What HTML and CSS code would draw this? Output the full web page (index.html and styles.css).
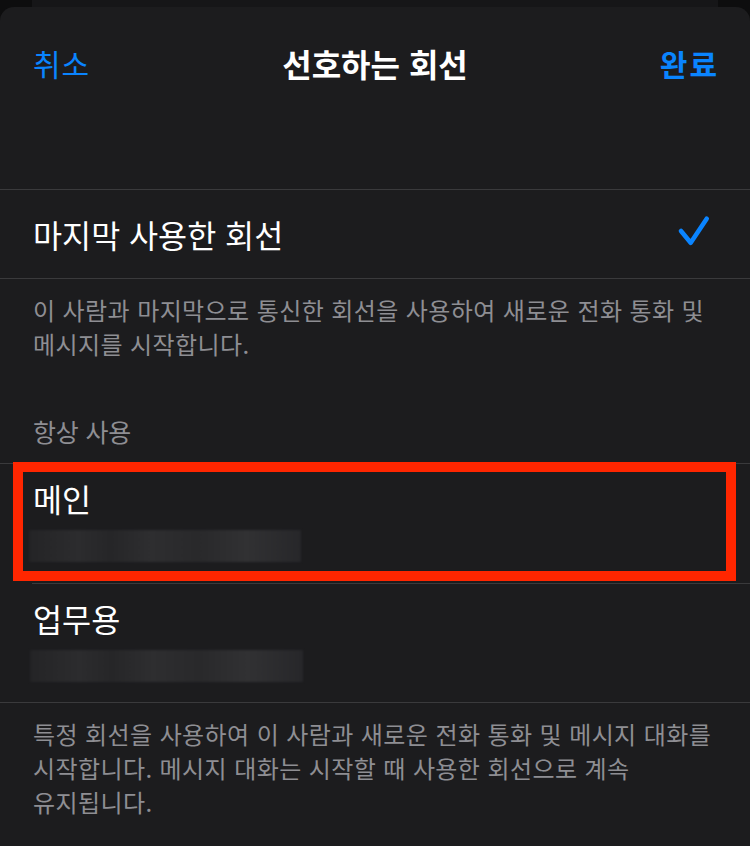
FILE: index.html
```html
<!DOCTYPE html>
<html lang="ko">
<head>
  <meta charset="utf-8">
  <title>선호하는 회선</title>
  <link rel="stylesheet" href="styles.css">
</head>
<body>
  <div class="back-card"></div>
  <div class="sheet">
    <div class="nav">
      <div class="nav-btn">취소</div>
      <div class="nav-title">선호하는 회선</div>
      <div class="nav-btn done">완료</div>
    </div>

    <div class="group first-group">
      <div class="row single">
        <div class="row-title">마지막 사용한 회선</div>
        <svg class="check" width="40" height="40" viewBox="0 0 40 40">
          <polyline points="5,17 14.7,28.7 30.7,4.7" fill="none" stroke="#0a84ff" stroke-width="4.6" stroke-linecap="round" stroke-linejoin="round"/>
        </svg>
      </div>
    </div>
    <div class="footnote">이 사람과 마지막으로 통신한 회선을 사용하여 새로운 전화 통화 및 메시지를 시작합니다.</div>

    <div class="section-label">항상 사용</div>
    <div class="group">
      <div class="row double">
        <div class="row-title">메인</div>
        <div class="redacted"></div>
        <div class="highlight"></div>
      </div>
      <div class="row double">
        <div class="row-title">업무용</div>
        <div class="redacted wide"></div>
      </div>
    </div>
    <div class="footnote">특정 회선을 사용하여 이 사람과 새로운 전화 통화 및 메시지 대화를 시작합니다. 메시지 대화는 시작할 때 사용한 회선으로 계속 유지됩니다.</div>
  </div>
</body>
</html>
```

FILE: styles.css
```css
body {
  margin: 0;
  background: #0d0d0e;
  font-family: "Noto Sans CJK KR", "Noto Sans", sans-serif;
  color: #ffffff;
  overflow: hidden;
  word-break: keep-all;
}

.back-card {
  height: 7px;
  margin: 0 32px;
  background: #161618;
}

.sheet {
  background: #1c1c1e;
  border-radius: 14px 14px 0 0;
  min-height: 839px;
}

.nav {
  height: 112px;
  display: flex;
  align-items: center;
  justify-content: space-between;
  padding: 0 33px;
}

.nav-btn {
  color: #0a84ff;
  font-size: 30px;
  letter-spacing: 1px;
}

.nav-btn.done {
  font-weight: bold;
  letter-spacing: 2px;
  margin-right: -2px;
}

.nav-title {
  font-size: 32px;
  font-weight: bold;
}

.group {
  border-top: 1px solid #3a3a3c;
  border-bottom: 1px solid #3a3a3c;
}

.first-group {
  margin-top: 70px;
}

.row {
  position: relative;
  padding: 0 40px 0 33px;
}

.row.single {
  height: 88px;
  display: flex;
  align-items: center;
  justify-content: space-between;
}

.row.double {
  height: 119px;
  display: flex;
  flex-direction: column;
  padding-top: 12px;
  box-sizing: border-box;
}

.row.double + .row.double {
  border-top: 1px solid #3a3a3c;
  margin-left: 32px;
  padding-left: 1px;
}

.row-title {
  font-size: 31.6px;
  line-height: 44px;
}

.check {
  margin-right: -6px;
}

.redacted {
  margin-top: 10px;
  margin-left: -4px;
  width: 272px;
  height: 32px;
  background: linear-gradient(90deg, #242426 0%, #2c2c2e 18%, #262628 30%, #2e2e30 45%, #29292b 62%, #313133 80%, #27272a 100%);
  filter: blur(1px);
}

.redacted.wide {
  margin-left: -3px;
  width: 273px;
}

.highlight {
  position: absolute;
  top: -2px;
  left: 13px;
  width: 703px;
  height: 99px;
  border: 10px solid #ff2600;
}

.footnote {
  color: #8e8e93;
  font-size: 24px;
  letter-spacing: 0.4px;
  line-height: 34px;
  padding: 14px 27px 0 33px;
}

.section-label {
  color: #8e8e93;
  font-size: 25px;
  letter-spacing: -0.2px;
  line-height: 34px;
  padding: 53px 33px 15px;
}
```
